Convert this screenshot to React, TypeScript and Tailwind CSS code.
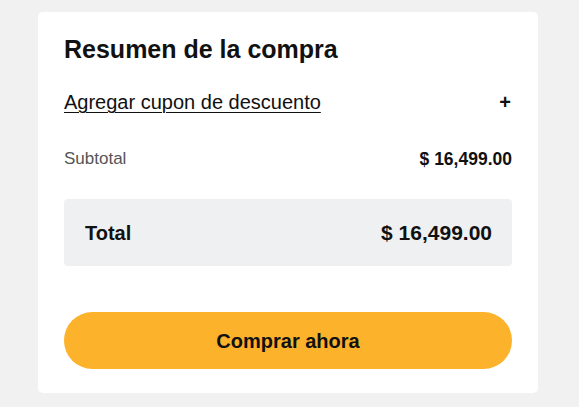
import React from 'react';

export default function App() {
    return (
        <div className="min-h-screen bg-[#f2f1f2] pt-[12px] pl-[38px] [font-family:'Liberation_Sans',Arial,sans-serif] text-[#111]">
            <div className="w-[500px] h-[381px] bg-white rounded-[5px] px-[26px] pt-[24px] pb-[24px] flex flex-col">
                <h2 className="text-[25px] leading-[26px] font-bold">Resumen de la compra</h2>

                <div className="mt-[26px] flex items-center justify-between h-[28px]">
                    <a href="#" className="text-[20px] leading-[28px] underline underline-offset-[3px] decoration-1">
                        Agregar cupon de descuento
                    </a>
                    <span className="text-[20px] leading-[28px] font-bold pr-[1px]">+</span>
                </div>

                <div className="mt-[31px] flex items-center justify-between h-[24px]">
                    <span className="text-[17px] text-[#555]">Subtotal</span>
                    <span className="text-[17.5px] font-bold">$ 16,499.00</span>
                </div>

                <div className="mt-[28px] h-[67px] bg-[#eff0f2] rounded-[4px] flex items-center justify-between pl-[21px] pr-[20px]">
                    <span className="text-[20px] font-bold">Total</span>
                    <span className="text-[21px] font-bold">$ 16,499.00</span>
                </div>

                <button className="mt-[46px] h-[57px] w-full rounded-full bg-[#fdb22c] text-[20px] font-bold text-[#111]">
                    Comprar ahora
                </button>
            </div>
        </div>
    );
}
